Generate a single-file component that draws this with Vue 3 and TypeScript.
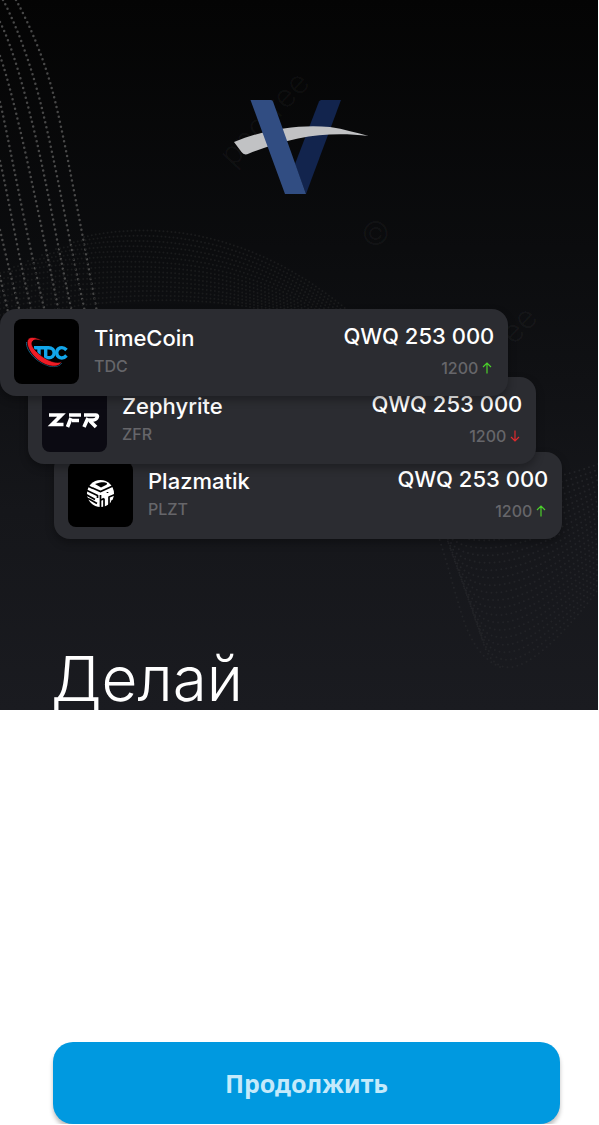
<script setup lang="ts">
interface Coin {
  id: string
  name: string
  ticker: string
  balance: string
  rate: string
  rising: boolean
}

const coins: Coin[] = [
  { id: 'tdc', name: 'TimeCoin', ticker: 'TDC', balance: 'QWQ 253 000', rate: '1200', rising: true },
  { id: 'zfr', name: 'Zephyrite', ticker: 'ZFR', balance: 'QWQ 253 000', rate: '1200', rising: false },
  { id: 'plzt', name: 'Plazmatik', ticker: 'PLZT', balance: 'QWQ 253 000', rate: '1200', rising: true },
]

// Bright dotted strands in the upper left corner
const strands: string[] = [
  'M16 0C31 27 45 62 53 93C65 138 84 245 97 312',
  'M3 0C20 32 34 75 43 113C56 165 71 250 85 312',
  'M0 22C13 48 24 90 32 122C47 181 59 255 72 312',
  'M0 56C15 98 36 200 59 312',
  'M0 102C9 140 24 225 45 312',
  'M0 161C9 200 20 265 32 312',
  'M0 230C7 260 13 285 20 312',
  'M0 276L8 312',
]

// Faint arches behind the first card
const arches: string[] = Array.from({ length: 15 }, (_, i) => {
  const start = Math.max(0, 84 - i * 14)
  return `M${start} ${237 + i * 6}C${150 - i * 3} ${222 + i * 5} ${250 - i * 2} ${227 + i * 5} ${352 - i * 5} 314`
})

// Hanging net in the lower right corner
const hammocks: string[] = Array.from({ length: 25 }, (_, i) => {
  const t = i / 24
  const x = 422 + 58 * t
  return `M${x} ${470 + 160 * t}C${x + 12} ${500 + 190 * t} 530 ${490 + 190 * t} 604 ${462 + 120 * t}`
})
</script>

<template>
  <main class="page">
    <section class="hero">
      <svg class="backdrop" viewBox="0 0 598 710" preserveAspectRatio="xMinYMin slice" aria-hidden="true">
        <g class="strands"><path v-for="(d, i) in strands" :key="i" :d="d" /></g>
        <g class="arches"><path v-for="(d, i) in arches" :key="i" :d="d" /></g>
        <g class="hammocks">
          <path v-for="(d, i) in hammocks" :key="i" :d="d" />
          <path d="M438 535C448 565 454 590 462 615C470 642 484 662 503 668" />
        </g>
        <g class="mark">
          <text transform="translate(233 168) rotate(-47)">pngtree</text>
          <text x="361" y="245">©</text>
          <text transform="translate(514 346) rotate(-47)">ee</text>
        </g>
      </svg>

      <svg class="brand" viewBox="0 0 136 96" role="img" aria-label="V">
        <path fill="#12244d" d="M86 1.500Q86.700 0 88.300 0H108L73 94L62 64Z" />
        <path fill="#c1c2c4" d="M1 42C32 29 68 24 97 27C111 29 124 33 135.500 36C96 31 59 36 16 53.500Q11 56 8.500 52Z" />
        <path fill="#314d82" d="M17.500 0H38Q39.500 0 40.200 2L73 94H52Z" />
      </svg>

      <ul class="coins">
        <li v-for="coin in coins" :key="coin.id" class="coin" :class="coin.id">
          <svg v-if="coin.id === 'tdc'" class="tile" viewBox="0 0 65 65" aria-hidden="true">
            <rect width="65" height="65" fill="#000" />
            <g fill="none" stroke="#12a5ea" stroke-width="3.400">
              <path d="M20 28.700H31M25 28.700V40.500" />
              <path d="M31.700 28.700H34.500C42 28.700 42 38.800 34.500 38.800H31.700Z" />
              <path d="M52.500 31C48.500 26.500 42.700 29 42.700 33.800S48.500 41 52.500 36.500" />
            </g>
            <path fill="none" stroke="#126b91" stroke-width="1" d="M12.500 23C12 32 22 43 35 47C41 48.500 46 47 47.500 44" />
            <path fill="#ee1c25" stroke="#000" stroke-width=".6" d="M31 23C21 19 17 21 18 26C21 35 40 47 47.500 42.500C46 49 34 49 24 41C13 32 10 20 17 18.500C21 18 26 20 31 23Z" />
          </svg>
          <svg v-else-if="coin.id === 'zfr'" class="tile" viewBox="0 0 65 65" aria-hidden="true">
            <rect width="65" height="65" fill="#0b0a12" />
            <g fill="none" stroke="#fff" stroke-width="3.600">
              <path d="M7 28H19.500L10 37.500H21.500" />
              <path d="M27 28H39M30 33.500H37M29 31L25.500 40" />
              <path d="M42 28H54C57 28 55 33 51 33H44M46 31L42 40M48 34L54 40" />
            </g>
          </svg>
          <svg v-else class="tile" viewBox="0 0 65 65" aria-hidden="true">
            <rect width="65" height="65" fill="#000" />
            <circle cx="32.500" cy="31.500" r="13.500" fill="#fff" />
            <g fill="none" stroke="#000" stroke-width="1.700">
              <path d="M18 23L25 26.500M32.500 33V46" />
              <path d="M24.500 26L32.500 29.500L47 23" />
              <path d="M18 28L29.500 33.500V36M18 32.500L27 37.500M18 36L22 37.500L29 41.500" />
              <path d="M36 46V36.500M39.500 30V31M41 46V34.500M36 36.500L33 38M41 35L47 32.500M43 39.500L47 38" />
            </g>
            <path fill="#000" d="M27 22L32 20.500C37 19.500 41 21 38 23L33 25.500Z" />
          </svg>
          <div class="title">
            <h2>{{ coin.name }}</h2>
            <p>{{ coin.ticker }}</p>
          </div>
          <div class="value">
            <strong>{{ coin.balance }}</strong>
            <p>
              {{ coin.rate }}
              <svg class="arrow" :class="{ falling: !coin.rising }" viewBox="0 0 10 12" aria-hidden="true">
                <path d="M5 11.500V1M1 5L5 1L9 5" />
              </svg>
            </p>
          </div>
        </li>
      </ul>

      <h1>Делай</h1>
    </section>

    <footer class="actions">
      <button type="button">Продолжить</button>
    </footer>
  </main>
</template>

<style>
body {
  margin: 0;
  background: #fff;
}
</style>

<style scoped>
.page {
  display: flex;
  flex-direction: column;
  min-height: 100vh;
  font-family: Inter, "Noto Sans", sans-serif;
}

.hero {
  position: relative;
  display: flex;
  flex-direction: column;
  margin-right: 1px;
  padding-top: 100px;
  overflow: hidden;
  background: linear-gradient(180deg, #040404 0%, #0b0c0e 35%, #15161a 72%, #1a1b20 100%);
}

.backdrop {
  position: absolute;
  inset: 0;
  width: 100%;
  height: 100%;
}

.backdrop path {
  fill: none;
  stroke-linecap: round;
}

.strands {
  stroke: #484848;
  stroke-width: 2.500;
  stroke-dasharray: 0 5;
}

.arches {
  stroke: #1a1b1c;
  stroke-width: 2;
  stroke-dasharray: 0 4;
}

.hammocks {
  stroke: #222327;
  stroke-width: 2;
  stroke-dasharray: 0 5;
}

.mark {
  fill: rgba(255, 255, 255, 0.04);
  font-size: 32px;
  font-weight: 300;
}

.brand {
  position: relative;
  align-self: center;
  width: 136px;
  height: 96px;
  margin-left: 4px;
}

.coins {
  position: relative;
  margin: 113px 0 0;
  padding: 0;
  list-style: none;
}

.coin {
  position: relative;
  display: flex;
  box-sizing: border-box;
  width: 85%;
  height: 87px;
  padding: 10px 14px 12px;
  gap: 15px;
  border-radius: 16px;
  background: #2b2c31;
  box-shadow: 0 4px 8px rgba(0, 0, 0, 0.3);
  color: #fff;
}

.tdc {
  z-index: 3;
}

.zfr {
  z-index: 2;
  margin: -19px 0 0 28px;
}

.plzt {
  z-index: 1;
  margin: -12px 0 0 54px;
}

.tile {
  flex: none;
  width: 65px;
  height: 65px;
  border-radius: 8px;
}

.title {
  flex: 1;
  padding-top: 5px;
}

.value {
  padding-top: 3px;
  text-align: right;
}

.coin h2,
.coin strong {
  display: block;
  margin: 0;
  font-size: 22px;
  font-weight: 500;
  line-height: 28px;
}

.coin p {
  margin: 0;
  color: #66666a;
  font-size: 16px;
  font-weight: 500;
  line-height: 28px;
}

.value p {
  display: flex;
  align-items: center;
  justify-content: flex-end;
  gap: 4px;
  padding: 4px 2px 0 0;
}

.arrow {
  width: 10px;
  height: 12px;
  fill: none;
  stroke: #4bd12b;
  stroke-width: 1.200;
}

.falling {
  stroke: #df2a2e;
  transform: rotate(180deg);
}

h1 {
  position: relative;
  height: 62px;
  margin: 109px 0 0 51px;
  color: #fff;
  font-size: 62px;
  font-weight: 300;
  line-height: 62px;
}

.actions {
  display: flex;
  margin: auto 0 1px;
  padding: 0 39px 0 53px;
  overflow: hidden;
}

button {
  flex: 1;
  height: 82px;
  border: 0;
  border-radius: 20px;
  background: #0099e0;
  box-shadow: 0 4px 4px rgba(0, 0, 0, 0.25);
  color: #c4eafb;
  font-family: "Noto Sans", sans-serif;
  font-size: 25px;
  font-weight: 700;
}
</style>
